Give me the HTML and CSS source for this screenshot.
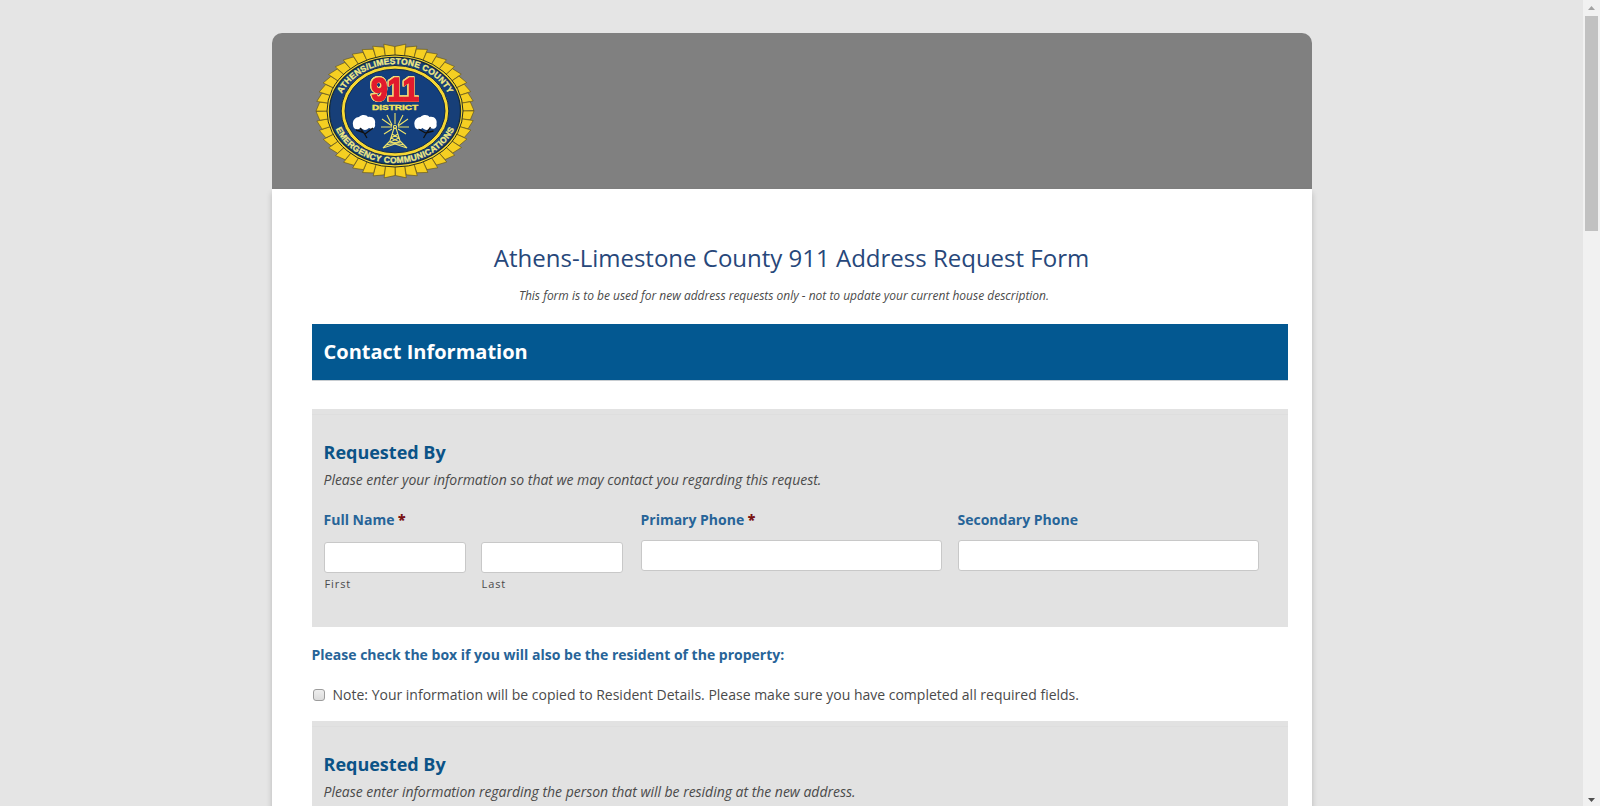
FILE: index.html
```html
<!DOCTYPE html>
<html lang="en">
<head>
<meta charset="utf-8">
<title>Athens-Limestone County 911 Address Request Form</title>
<link rel="stylesheet" href="styles.css">
</head>
<body>
<div class="viewport">
  <main class="page">
    <form class="sheet">
      <header class="banner">
        <svg class="seal" width="160" height="138" viewBox="-80 -69 160 138" role="img" aria-label="Athens/Limestone County 911 District Emergency Communications">
          <defs>
            <path id="arc-top" d="M-57 0A57 47 0 0 1 57 0"/>
            <path id="arc-bottom" d="M-63 0A63 52 0 0 0 63 0"/>
          </defs>
          <g id="rays" fill="#f5cf22" stroke="#5a4d14" stroke-width=".6" stroke-linejoin="round"></g>
          <ellipse rx="68" ry="56" fill="#f6d733" stroke="#222b22" stroke-width="1"/>
          <ellipse rx="65.5" ry="53.5" fill="#173f78" stroke="#142a3c" stroke-width="1.3"/>
          <ellipse rx="53.8" ry="45.5" fill="#f6d733" stroke="#132a43" stroke-width="1"/>
          <ellipse rx="50" ry="41.8" fill="#143f7d" stroke="#122a49" stroke-width="1"/>
          <g class="seal-rim">
            <text><textPath href="#arc-top" startOffset="50%" text-anchor="middle" textLength="128">ATHENS/LIMESTONE COUNTY</textPath></text>
            <text><textPath href="#arc-bottom" startOffset="50%" text-anchor="middle" textLength="144">EMERGENCY COMMUNICATIONS</textPath></text>
          </g>
          <text class="seal-number" x="0" y="-10.500" text-anchor="middle" textLength="48" lengthAdjust="spacingAndGlyphs">911</text>
          <text class="seal-district" x="0" y="-1.200" text-anchor="middle" textLength="46" lengthAdjust="spacingAndGlyphs">DISTRICT</text>
          <g transform="translate(-31 13)">
            <path d="M-11 1C-12-4-8-7-5-7C-2-10 3-9 4-7C9-8 12-4 11 0C12 4 8 6 5 4C2 7-1 6-3 4C-7 7-11 5-11 1Z" fill="#fff"/>
            <path d="M-8 6Q-4 7 0 9M-4 4L0 9L3 14M1 10L9 4" fill="none" stroke="#111" stroke-width="1.3"/>
          </g>
          <g transform="translate(30.500 13)">
            <path d="M-11 1C-12-4-8-7-5-7C-2-10 3-9 4-7C9-8 12-4 11 0C12 4 8 6 5 4C2 7-1 6-3 4C-7 7-11 5-11 1Z" fill="#fff"/>
            <path d="M5 3L1 9L-2 14M0 9L-7 5M0 9L8 7" fill="none" stroke="#111" stroke-width="1.3"/>
          </g>
          <g fill="none" stroke="#eee36a" stroke-width="1.1">
            <path d="M0 13V2M-3 14L-8 4M3 14L8 4M-3 15L-13 8M3 15L13 8M-3 16L-14 16M3 16L14 16M-3 18L-11 23M3 18L11 23"/>
            <path d="M-1 17L-5 30L-12 37L0 33L12 37L5 30L1 17ZM-3 23L4 27L-5 31L9 34M3 23L-4 27L5 31L-9 34"/>
            <circle cy="16" r="1.6"/>
          </g>
        </svg>
      </header>
      <div class="content">
        <h1 class="title">Athens-Limestone County 911 Address Request Form</h1>
        <p class="subtitle">This form is to be used for new address requests only - not to update your current house description.</p>
        <h2 class="section-bar">Contact Information</h2>
        <section class="panel panel-first">
          <h3 class="panel-title">Requested By</h3>
          <p class="panel-note">Please enter your information so that we may contact you regarding this request.</p>
          <div class="fields">
            <div class="field">
              <span class="label">Full Name <b class="required">*</b></span>
              <div class="names">
                <label class="name"><input class="box" type="text"><span class="hint">First</span></label>
                <label class="name"><input class="box" type="text"><span class="hint">Last</span></label>
              </div>
            </div>
            <label class="field"><span class="label">Primary Phone <b class="required">*</b></span><input class="box" type="text"></label>
            <label class="field"><span class="label">Secondary Phone</span><input class="box" type="text"></label>
          </div>
        </section>
        <p class="label question">Please check the box if you will also be the resident of the property:</p>
        <label class="option"><input class="check" type="checkbox"><span class="option-text">Note: Your information will be copied to Resident Details. Please make sure you have completed all required fields.</span></label>
        <section class="panel panel-second">
          <h3 class="panel-title">Requested By</h3>
          <p class="panel-note">Please enter information regarding the person that will be residing at the new address.</p>
        </section>
      </div>
    </form>
  </main>
  <div class="scrollbar">
    <svg class="arrow" width="17" height="16" viewBox="0 0 17 16"><path d="M5 10L8.500 6L12 10Z" fill="#a3a3a3"/></svg>
    <div class="thumb"></div>
    <svg class="arrow arrow-down" width="17" height="14" viewBox="0 0 17 14"><path d="M5 6L8.500 10L12 6Z" fill="#505050"/></svg>
  </div>
</div>
<script src="script.js"></script>
</body>
</html>
```
FILE: styles.css
```css
* { box-sizing: border-box; }
body {
  margin: 0;
  font-family: "Open Sans", "Noto Sans", sans-serif;
  color: #4a4a4a;
  background: #e5e5e5;
}
h1, h2, h3, p { margin: 0; }
.viewport { display: flex; height: 806px; overflow: hidden; }
.page { flex: 1; padding: 33px 0 0 1px; overflow: hidden; }
.sheet { width: 1040px; margin: 0 auto; }
.banner {
  height: 156px;
  padding: 9px 0 0 43px;
  background: #808080;
  border-radius: 10px 10px 0 0;
}
.seal { display: block; }
.seal-rim {
  font: bold 8.5px "Liberation Sans", Arial, sans-serif;
  fill: #f4ec83;
  stroke: #f4ec83;
  stroke-width: .3px;
}
.seal-number {
  font: bold 34px "Liberation Sans", Arial, sans-serif;
  fill: #e21b2d;
  stroke: #e21b2d;
  stroke-width: 1.6px;
  filter: drop-shadow(.8px 0 0 #f2db79) drop-shadow(-.8px 0 0 #f2db79) drop-shadow(0 .7px 0 #f2db79) drop-shadow(0 -.7px 0 #f2db79);
}
.seal-district {
  font: bold 8px "Liberation Sans", Arial, sans-serif;
  fill: #f4e45c;
  stroke: #f4e45c;
  stroke-width: .4px;
}

.content {
  height: 1200px;
  padding: 50px 24px 0 40px;
  background: #fff;
  box-shadow: 0 4px 6px rgba(0, 0, 0, .2);
}
.title {
  margin-left: -17px;
  text-align: center;
  font-size: 24px;
  line-height: 38px;
  font-weight: 400;
  color: #27477a;
}
.subtitle {
  margin: 9px 0 0 -32px;
  text-align: center;
  font-size: 12px;
  line-height: 20px;
  font-style: italic;
  letter-spacing: -.01px;
}
.section-bar {
  height: 57px;
  margin-top: 18px;
  padding-left: 11.5px;
  background: #035891;
  border-bottom: 1px solid #c8cdd1;
  font-size: 20px;
  line-height: 56px;
  font-weight: 700;
  color: #fff;
}
.panel {
  padding: 5px 12px 0 11.5px;
  background: #e2e2e2;
}
.panel::before { content: ""; display: block; height: 24px; margin: 0 -12px 0 -11.5px; border-top: 1px solid #dedede; }
.panel-first { height: 218px; margin-top: 28px; }
.panel-second { height: 300px; }
.panel-title { font-size: 18px; line-height: 26px; font-weight: 700; color: #0b5387; }
.panel-note { padding-top: 1px; font-size: 14px; line-height: 28px; font-style: italic; letter-spacing: -.025px; }
.fields { display: grid; grid-template-columns: repeat(3, 301px); gap: 16px; margin: 16px 0 0 .5px; }
.field { display: flex; flex-direction: column; gap: 10px; }
.label { font-size: 14px; line-height: 20px; font-weight: 700; color: #276498; }
.field .label { margin-left: -.5px; }
.required { color: #7a1414; }
.names { display: flex; gap: 15px; padding-top: 2px; }
.name { display: flex; flex-direction: column; width: 142px; }
.box {
  width: 100%;
  height: 31px;
  padding: 0 8px;
  border: 1px solid #c8c8c8;
  border-radius: 3px;
  background: #fff;
}
.hint { padding: 3px 0 0 .5px; font-size: 11px; line-height: 16px; letter-spacing: .9px; }
.question { margin: 18px 0 0 -.5px; }
.option { display: flex; align-items: center; height: 20px; margin: 20px 0 16px; }
.check {
  appearance: none;
  width: 12px;
  height: 12px;
  margin: 0 7.5px 0 1px;
  border: 1px solid #9c9c9c;
  border-radius: 3px;
  background: linear-gradient(#eee, #dcdcdc);
}
.option-text { font-size: 14px; line-height: 20px; }

.scrollbar { display: flex; flex-direction: column; width: 17px; background: #f1f1f1; }
.arrow { display: block; }
.thumb { width: 13px; height: 215px; margin-left: 2px; background: #c1c1c1; }
.arrow-down { margin-top: auto; }
```
FILE: script.js
```js
// Draws the ring of slanted petals round the seal.
const rays = document.getElementById("rays");
const count = 44;
const point = (turn, rx, ry) =>
  (Math.sin(turn) * rx).toFixed(2) + "," + (-Math.cos(turn) * ry).toFixed(2);
for (let i = 0; i < count; i++) {
  const step = (2 * Math.PI) / count;
  const start = i * step;
  const upper = Math.cos(start + step / 2) > 0;
  const right = start < Math.PI;
  const near = right === upper ? [76, 64.5] : [79, 67.5];
  const far = right === upper ? [79, 67.5] : [76, 64.5];
  const petal = document.createElementNS("http://www.w3.org/2000/svg", "polygon");
  petal.setAttribute("points", [
    point(start, 66, 54),
    point(start, ...near),
    point(start + step * 0.96, ...far),
    point(start + step, 66, 54)
  ].join(" "));
  rays.appendChild(petal);
}
```
